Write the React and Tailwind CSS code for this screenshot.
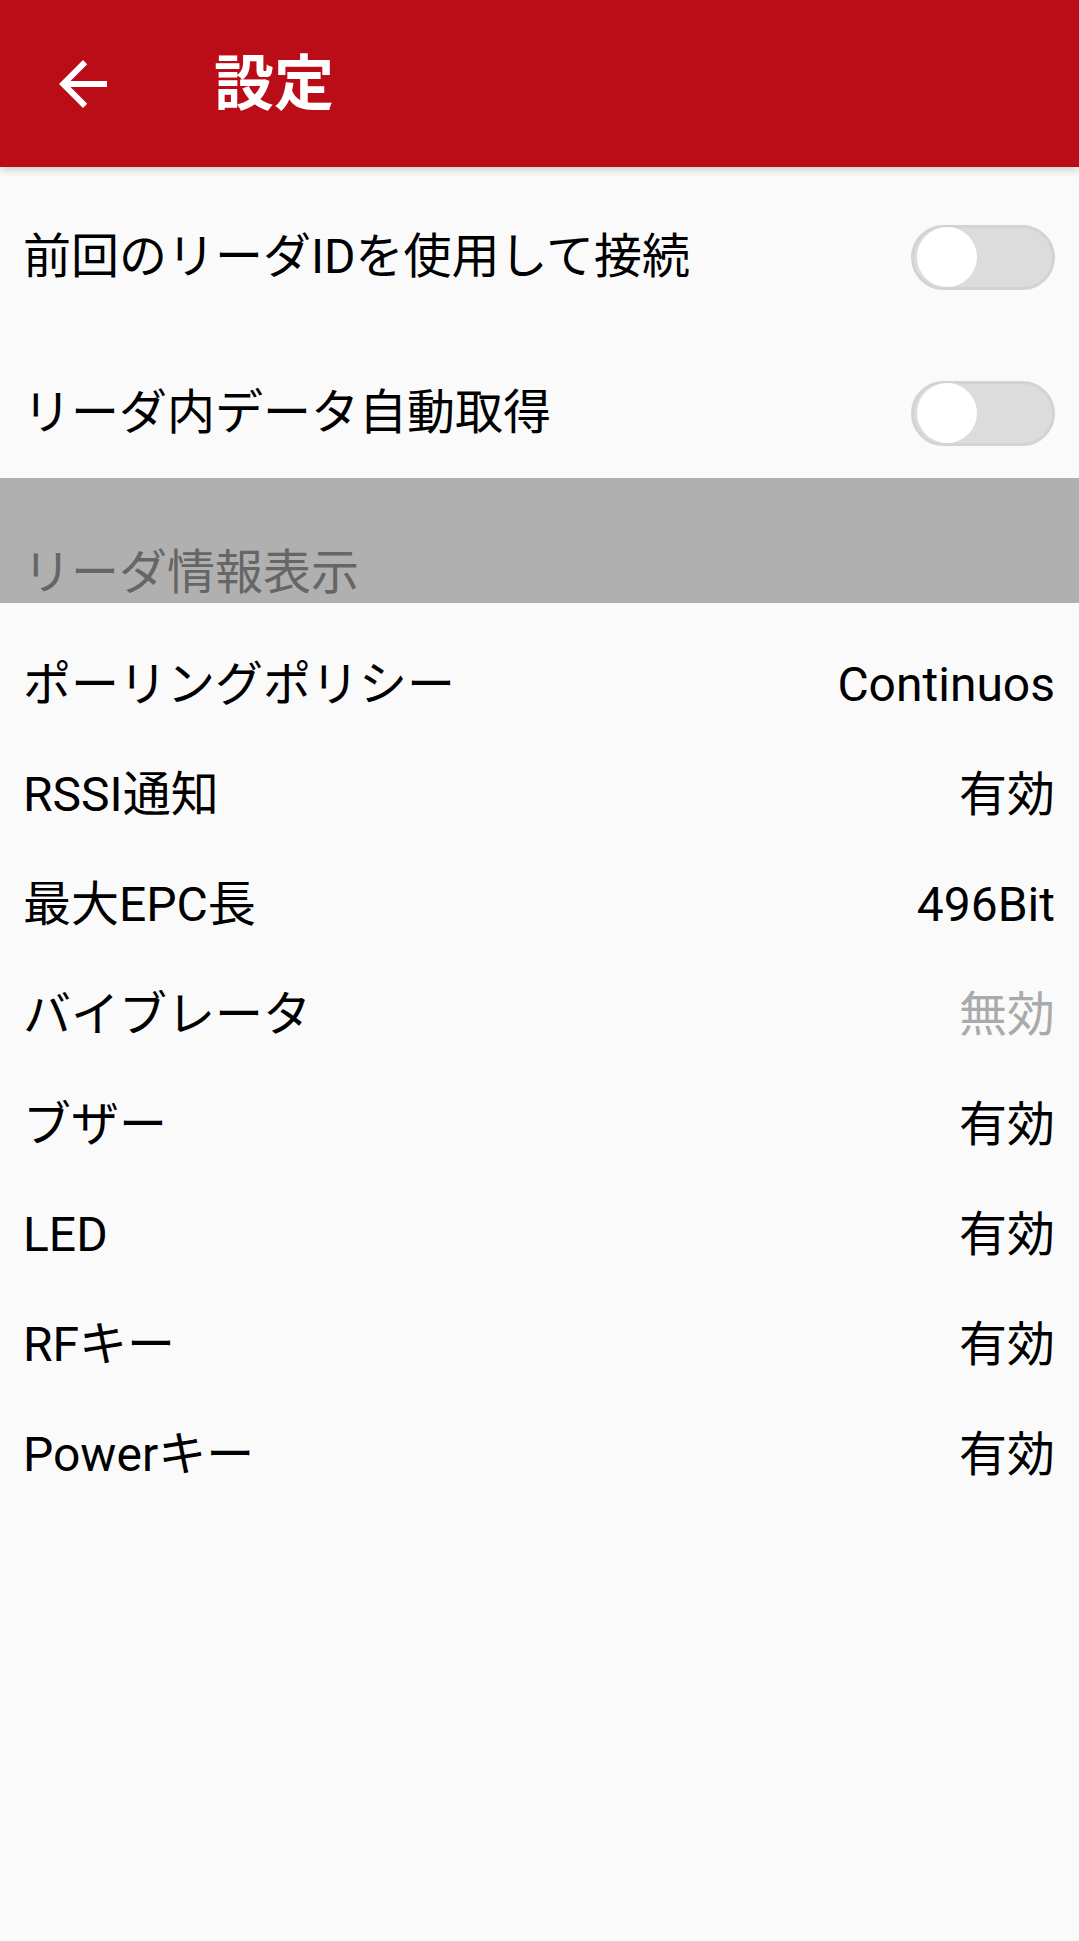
import React from 'react';

const items = [
    { label: 'ポーリングポリシー', value: 'Continuos' },
    { label: 'RSSI通知', value: '有効' },
    { label: '最大EPC長', value: '496Bit' },
    { label: 'バイブレータ', value: '無効', muted: true },
    { label: 'ブザー', value: '有効' },
    { label: 'LED', value: '有効' },
    { label: 'RFキー', value: '有効' },
    { label: 'Powerキー', value: '有効' },
];

function Toggle() {
    return (
        <div className="w-[144px] h-[65px] rounded-full bg-[#dcdcdc] border-[3px] border-[#d3d3d3] flex items-center pl-[3px]">
            <div className="w-[60px] h-[60px] rounded-full bg-white" />
        </div>
    );
}

export default function App() {
    return (
        <div className="w-[1079px] min-h-[1941px] bg-[#fafafa] text-black" style={{ fontFamily: 'Roboto, "Noto Sans CJK JP", sans-serif' }}>
            <div className="relative h-[167px] bg-[#bb0d18] flex items-center z-10 shadow-[0_3px_8px_rgba(0,0,0,0.18)]">
                <div className="w-[72px] h-[72px] ml-[47px]">
                    <svg viewBox="0 0 24 24" className="w-[72px] h-[72px]" fill="white">
                        <path d="M20 11H7.83l5.59-5.59L12 4l-8 8 8 8 1.41-1.41L7.83 13H20v-2z" />
                    </svg>
                </div>
                <h1 className="ml-[95px] mt-[2px] text-white font-bold text-[60px] leading-none">設定</h1>
            </div>

            <div className="pt-[25px]">
                <div className="h-[130px] flex items-center justify-between pl-[23px] pr-[24px]">
                    <span className="text-[48px] leading-none">前回のリーダIDを使用して接続</span>
                    <Toggle />
                </div>
                <div className="h-[130px] mt-[26px] flex items-center justify-between pl-[23px] pr-[24px]">
                    <span className="text-[48px] leading-none">リーダ内データ自動取得</span>
                    <Toggle />
                </div>
            </div>

            <div className="h-[125px] bg-[#b0b0b0] flex items-end pl-[23px] pb-[6px]">
                <span className="text-[48px] leading-none text-[#666666]">リーダ情報表示</span>
            </div>

            <div className="pt-[27px]">
                {items.map((item) => (
                    <div key={item.label} className="h-[110px] flex items-center justify-between pl-[23px] pr-[24px]">
                        <span className="text-[48px] leading-none">{item.label}</span>
                        <span className={item.muted ? 'text-[48px] leading-none text-[#aaaaaa]' : 'text-[48px] leading-none'}>{item.value}</span>
                    </div>
                ))}
            </div>
        </div>
    );
}
